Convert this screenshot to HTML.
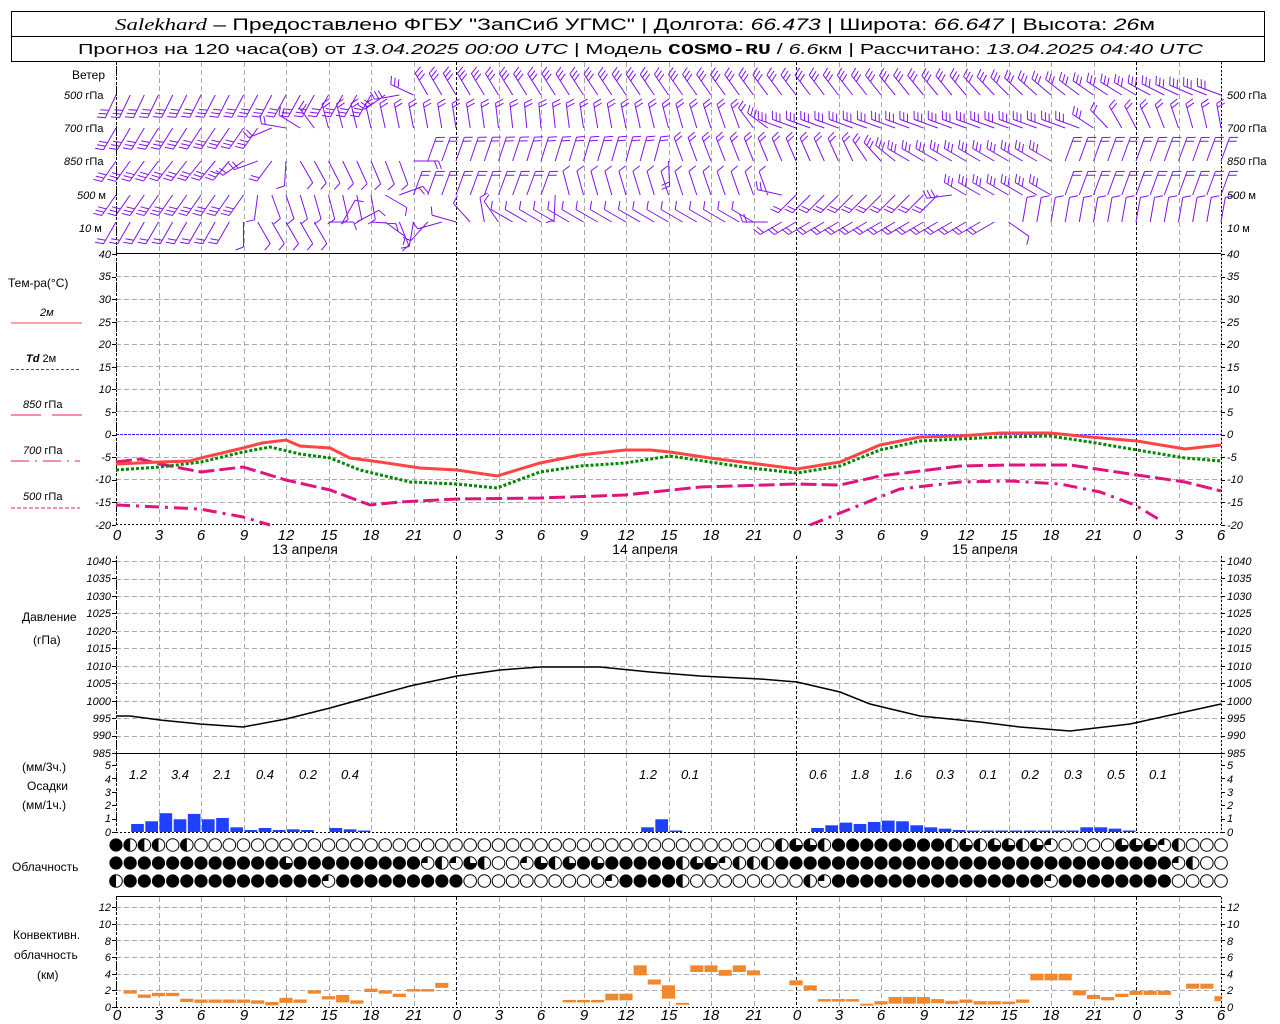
<!DOCTYPE html>
<html><head><meta charset="utf-8"><style>
html,body{margin:0;padding:0;background:#fff;width:1280px;height:1024px;overflow:hidden}
svg{display:block}
.t{font-family:"Liberation Sans",sans-serif;font-size:12px;fill:#000}
.tk{font-family:"Liberation Sans",sans-serif;font-style:italic;font-size:11px;fill:#000}
.hx{font-family:"Liberation Sans",sans-serif;font-style:italic;font-size:15px;fill:#000}
.pr{font-family:"Liberation Sans",sans-serif;font-style:italic;font-size:13px;fill:#000}
</style></head><body>
<svg id="s" xmlns="http://www.w3.org/2000/svg" width="1280" height="1024" viewBox="0 0 1280 1024">
<rect x="11.5" y="11.5" width="1253" height="50" fill="none" stroke="#000"/>
<line x1="11" y1="36.5" x2="1265" y2="36.5" stroke="#000"/>
<text x="115" y="30" textLength="1040" lengthAdjust="spacingAndGlyphs" style="font-family:'Liberation Sans',sans-serif;font-size:17px"><tspan style="font-family:'Liberation Serif',serif;font-style:italic">Salekhard</tspan> – Предоставлено ФГБУ "ЗапСиб УГМС" | Долгота: <tspan font-style="italic">66.473</tspan> | Широта: <tspan font-style="italic">66.647</tspan> | Высота: <tspan font-style="italic">26</tspan>м</text>
<text x="78" y="54" textLength="1125" lengthAdjust="spacingAndGlyphs" style="font-family:'Liberation Sans',sans-serif;font-size:15px">Прогноз на 120 часа(ов) от <tspan font-style="italic">13.04.2025 00:00 UTC</tspan>  | Модель <tspan font-weight="bold" style="font-family:'Liberation Mono',monospace">COSMO-RU</tspan> / <tspan font-style="italic">6.6</tspan>км | Рассчитано: <tspan font-style="italic">13.04.2025 04:40 UTC</tspan></text>

<g id="grid"></g>
<g id="wind"></g>
<g id="plots"></g>

<text class="t" x="72" y="79">Ветер</text>
<text class="tk" x="64" y="99">500 <tspan font-style="normal">гПа</tspan></text>
<text class="tk" x="64" y="132">700 <tspan font-style="normal">гПа</tspan></text>
<text class="tk" x="64" y="165">850 <tspan font-style="normal">гПа</tspan></text>
<text class="tk" x="77" y="199">500 <tspan font-style="normal">м</tspan></text>
<text class="tk" x="79" y="232">10 <tspan font-style="normal">  м</tspan></text>
<text class="tk" x="1227" y="99">500 <tspan font-style="normal">гПа</tspan></text>
<text class="tk" x="1227" y="132">700 <tspan font-style="normal">гПа</tspan></text>
<text class="tk" x="1227" y="165">850 <tspan font-style="normal">гПа</tspan></text>
<text class="tk" x="1227" y="199">500 <tspan font-style="normal">м</tspan></text>
<text class="tk" x="1227" y="232">10 <tspan font-style="normal">  м</tspan></text>

<text class="t" x="8" y="287">Тем-ра(°C)</text>
<text class="tk" x="40" y="316" font-style="normal">2м</text>
<line x1="11" y1="323" x2="82" y2="323" stroke="#f44"/>
<text class="tk" x="26" y="362"><tspan font-weight="bold">Td</tspan> <tspan font-style="normal">  2м</tspan></text>
<line x1="11" y1="369.5" x2="80" y2="369.5" stroke="#080" stroke-dasharray="3,2"/>
<text class="tk" x="23" y="408">850 <tspan font-style="normal">гПа</tspan></text>
<line x1="11" y1="415" x2="41" y2="415" stroke="#e0147f"/><line x1="52" y1="415" x2="82" y2="415" stroke="#e0147f"/>
<text class="tk" x="23" y="454">700 <tspan font-style="normal">гПа</tspan></text>
<line x1="11" y1="461" x2="80" y2="461" stroke="#e0147f" stroke-dasharray="18,6,2,6"/>
<text class="tk" x="23" y="500">500 <tspan font-style="normal">гПа</tspan></text>
<line x1="11" y1="508" x2="80" y2="508" stroke="#e0147f" stroke-dasharray="4,2"/>

<text class="t" x="22" y="621">Давление</text>
<text class="t" x="33" y="644">(гПа)</text>
<text class="t" x="22" y="771">(мм/3ч.)</text>
<text class="t" x="27" y="790">Осадки</text>
<text class="t" x="22" y="809">(мм/1ч.)</text>
<text class="t" x="12" y="871">Облачность</text>
<text class="t" x="13" y="939">Конвективн.</text>
<text class="t" x="14" y="959">облачность</text>
<text class="t" x="37" y="979">(км)</text>

<g class="tk" text-anchor="end">
<text x="111" y="258">40</text><text x="111" y="280">35</text><text x="111" y="303">30</text><text x="111" y="326">25</text><text x="111" y="348">20</text><text x="111" y="371">15</text><text x="111" y="393">10</text><text x="111" y="416">5</text><text x="111" y="438">0</text><text x="111" y="461">-5</text><text x="111" y="483">-10</text><text x="111" y="506">-15</text><text x="111" y="529">-20</text>
<text x="111" y="565">1040</text><text x="111" y="582">1035</text><text x="111" y="600">1030</text><text x="111" y="617">1025</text><text x="111" y="635">1020</text><text x="111" y="652">1015</text><text x="111" y="670">1010</text><text x="111" y="687">1005</text><text x="111" y="705">1000</text><text x="111" y="722">995</text><text x="111" y="739">990</text><text x="111" y="757">985</text>
<text x="111" y="769">5</text><text x="111" y="783">4</text><text x="111" y="796">3</text><text x="111" y="809">2</text><text x="111" y="822">1</text><text x="111" y="836">0</text>
<text x="111" y="911">12</text><text x="111" y="928">10</text><text x="111" y="945">8</text><text x="111" y="961">6</text><text x="111" y="978">4</text><text x="111" y="994">2</text><text x="111" y="1011">0</text>
</g>
<g class="tk">
<text x="1227" y="258">40</text><text x="1227" y="280">35</text><text x="1227" y="303">30</text><text x="1227" y="326">25</text><text x="1227" y="348">20</text><text x="1227" y="371">15</text><text x="1227" y="393">10</text><text x="1227" y="416">5</text><text x="1227" y="438">0</text><text x="1227" y="461">-5</text><text x="1227" y="483">-10</text><text x="1227" y="506">-15</text><text x="1227" y="529">-20</text>
<text x="1227" y="565">1040</text><text x="1227" y="582">1035</text><text x="1227" y="600">1030</text><text x="1227" y="617">1025</text><text x="1227" y="635">1020</text><text x="1227" y="652">1015</text><text x="1227" y="670">1010</text><text x="1227" y="687">1005</text><text x="1227" y="705">1000</text><text x="1227" y="722">995</text><text x="1227" y="739">990</text><text x="1227" y="757">985</text>
<text x="1227" y="769">5</text><text x="1227" y="783">4</text><text x="1227" y="796">3</text><text x="1227" y="809">2</text><text x="1227" y="822">1</text><text x="1227" y="836">0</text>
<text x="1227" y="911">12</text><text x="1227" y="928">10</text><text x="1227" y="945">8</text><text x="1227" y="961">6</text><text x="1227" y="978">4</text><text x="1227" y="994">2</text><text x="1227" y="1011">0</text>
</g>
<g class="hx" text-anchor="middle">
<text x="117" y="540">0</text><text x="159" y="540">3</text><text x="201" y="540">6</text><text x="244" y="540">9</text><text x="286" y="540">12</text><text x="329" y="540">15</text><text x="371" y="540">18</text><text x="414" y="540">21</text><text x="457" y="540">0</text><text x="499" y="540">3</text><text x="541" y="540">6</text><text x="584" y="540">9</text><text x="626" y="540">12</text><text x="669" y="540">15</text><text x="711" y="540">18</text><text x="754" y="540">21</text><text x="797" y="540">0</text><text x="839" y="540">3</text><text x="881" y="540">6</text><text x="924" y="540">9</text><text x="966" y="540">12</text><text x="1009" y="540">15</text><text x="1051" y="540">18</text><text x="1094" y="540">21</text><text x="1137" y="540">0</text><text x="1179" y="540">3</text><text x="1221" y="540">6</text>
<text x="117" y="1020">0</text><text x="159" y="1020">3</text><text x="201" y="1020">6</text><text x="244" y="1020">9</text><text x="286" y="1020">12</text><text x="329" y="1020">15</text><text x="371" y="1020">18</text><text x="414" y="1020">21</text><text x="457" y="1020">0</text><text x="499" y="1020">3</text><text x="541" y="1020">6</text><text x="584" y="1020">9</text><text x="626" y="1020">12</text><text x="669" y="1020">15</text><text x="711" y="1020">18</text><text x="754" y="1020">21</text><text x="797" y="1020">0</text><text x="839" y="1020">3</text><text x="881" y="1020">6</text><text x="924" y="1020">9</text><text x="966" y="1020">12</text><text x="1009" y="1020">15</text><text x="1051" y="1020">18</text><text x="1094" y="1020">21</text><text x="1137" y="1020">0</text><text x="1179" y="1020">3</text><text x="1221" y="1020">6</text>
</g>
<g style="font-family:'Liberation Sans',sans-serif;font-size:14px" text-anchor="middle">
<text x="305" y="554">13 апреля</text><text x="645" y="554">14 апреля</text><text x="985" y="554">15 апреля</text>
</g>
<g class="pr" text-anchor="middle">
<text x="138" y="779">1.2</text><text x="180" y="779">3.4</text><text x="222" y="779">2.1</text><text x="265" y="779">0.4</text><text x="308" y="779">0.2</text><text x="350" y="779">0.4</text><text x="648" y="779">1.2</text><text x="690" y="779">0.1</text><text x="818" y="779">0.6</text><text x="860" y="779">1.8</text><text x="903" y="779">1.6</text><text x="945" y="779">0.3</text><text x="988" y="779">0.1</text><text x="1030" y="779">0.2</text><text x="1073" y="779">0.3</text><text x="1116" y="779">0.5</text><text x="1158" y="779">0.1</text>
</g>
</svg>
<script>
(function(){
var NS="http://www.w3.org/2000/svg";
function el(p,n,a){var e=document.createElementNS(NS,n);for(var k in a)e.setAttribute(k,a[k]);p.appendChild(e);return e;}
var G=document.getElementById('grid'),W=document.getElementById('wind'),P=document.getElementById('plots');
var X0=116,DX=14.1667;function X(h){return X0+h*DX;}
var secs=[[62,253],[253,525],[556,753],[753,832],[897,1007]];
secs.forEach(function(s){
 for(var h=0;h<=78;h+=3){var x=Math.round(X(h))+0.5;
  var day=(h%24==0);
  el(G,'line',{x1:x,y1:s[0],x2:x,y2:s[1],stroke:day?'#000':'#aaa','stroke-dasharray':day?'3,2':'5,3','stroke-width':1});}
});
for(var t=35;t>=-20;t-=5){var y=Math.round(434-t*4.516)+0.5;if(t==0)continue;el(G,'line',{x1:116,y1:y,x2:1221,y2:y,stroke:t==-20?'#000':'#aaa','stroke-dasharray':t==-20?'2,2':'5,3'});}
el(G,'line',{x1:116,y1:434.5,x2:1221,y2:434.5,stroke:'#33f','stroke-dasharray':'3,1'});
for(var p=1040;p>985;p-=5){var y=Math.round(753-(p-985)*3.49)+0.5;el(G,'line',{x1:116,y1:y,x2:1221,y2:y,stroke:'#aaa','stroke-dasharray':'5,3'});}
for(var k=2;k<=12;k+=2){var y=Math.round(1007-k*8.33)+0.5;el(G,'line',{x1:116,y1:y,x2:1221,y2:y,stroke:'#aaa','stroke-dasharray':'5,3'});}
[253.5,753.5,896.5].forEach(function(y){el(G,'line',{x1:116,y1:y,x2:1221,y2:y,stroke:'#000'});});
[832.5,1007.5].forEach(function(y){el(G,'line',{x1:116,y1:y,x2:1221,y2:y,stroke:'#000','stroke-dasharray':'2,2'});});
[[62,525],[556,832],[897,1007]].forEach(function(s){
 el(G,'line',{x1:116.5,y1:s[0],x2:116.5,y2:s[1],stroke:'#000','stroke-dasharray':'2,2'});
 el(G,'line',{x1:1221.5,y1:s[0],x2:1221.5,y2:s[1],stroke:'#000','stroke-dasharray':'2,2'});
});
function ticks(a,b,step){for(var y=a;y<=b+0.1;y+=step){el(G,'line',{x1:112,y1:Math.round(y)+0.5,x2:116,y2:Math.round(y)+0.5,stroke:'#000'});el(G,'line',{x1:1221,y1:Math.round(y)+0.5,x2:1225,y2:Math.round(y)+0.5,stroke:'#000'});}}
ticks(254,525,22.58);ticks(561,753,17.45);ticks(765,832,13.4);ticks(907,1007,16.66);

function poly(pts,attr){var d=pts.map(function(p){return p[0]+','+p[1];}).join(' ');attr.points=d;attr.fill='none';el(P,'polyline',attr);}
poly([[116,505],[160,507],[200,509],[243,517],[270,525]],{stroke:'#e0147f','stroke-width':3,'stroke-dasharray':'14,6,3,6'});
poly([[810,525],[860,505],[900,489],[960,482],[1010,481],[1060,484],[1100,492],[1135,505],[1160,520]],{stroke:'#e0147f','stroke-width':3,'stroke-dasharray':'14,6,3,6'});
poly([[116,462],[140,459],[160,464],[201,472],[243,467],[286,480],[330,490],[370,505],[400,502],[457,499],[540,498],[625,495],[700,487],[797,484],[840,485],[880,476],[960,466],[1010,465],[1070,465],[1137,475],[1185,482],[1221,491]],{stroke:'#e0147f','stroke-width':3,'stroke-dasharray':'16,5'});
poly([[116,470],[160,467],[201,462],[243,452],[270,447],[300,454],[330,458],[360,470],[410,482],[457,484],[497,488],[540,472],[580,466],[625,463],[670,456],[710,462],[750,468],[797,473],[840,466],[880,450],[920,441],[960,439],[1000,437],[1050,436],[1090,442],[1137,450],[1185,458],[1221,461]],{stroke:'#080','stroke-width':3,'stroke-dasharray':'3,2'});
poly([[116,464],[160,462],[190,461],[201,458],[243,448],[262,443],[286,440],[300,446],[330,448],[350,458],[380,462],[420,468],[457,470],[497,476],[540,463],[580,455],[625,450],[650,450],[670,452],[710,458],[750,463],[797,469],[840,462],[880,445],[920,437],[960,436],[1000,433],[1050,433],[1090,437],[1137,441],[1185,449],[1221,445]],{stroke:'#f44','stroke-width':3});
poly([[116,716],[130,716],[160,720],[200,724],[243,727],[286,719],[330,708],[370,697],[410,686],[457,676],[500,670],[540,667],[600,667],[650,672],[700,676],[760,679],[797,682],[840,692],[870,704],[920,716],[980,722],[1020,727],[1070,731],[1130,724],[1180,713],[1221,704]],{stroke:'#000','stroke-width':1.5});

var pr={1:.6,2:.8,3:1.4,4:.95,5:1.35,6:.95,7:1.05,8:.35,9:.15,10:.3,11:.15,12:.2,13:.15,15:.3,16:.2,17:.08,37:.35,38:.95,39:.05,49:.3,50:.5,51:.7,52:.6,53:.75,54:.85,55:.8,56:.5,57:.35,58:.25,59:.15,60:.1,61:.05,62:.05,63:.05,64:.05,65:.05,66:.05,67:.05,68:.35,69:.35,70:.25,71:.1};
for(var h in pr){var v=pr[h],x=X(+h)+1,hh=Math.max(1.5,v*13.4);el(P,'rect',{x:x,y:832-hh,width:DX-1.5,height:hh,fill:'#2040ff'});}
var cv=[[1,1.8,.4],[2,1.3,.4],[3,1.5,.4],[4,1.5,.4],[5,.8,.4],[6,.7,.4],[7,.7,.4],[8,.7,.4],[9,.7,.4],[10,.6,.4],[11,.4,.4],[12,.8,.6],[13,.7,.4],[14,1.8,.4],[15,1.1,.4],[16,1.0,.9],[17,.6,.4],[18,2.0,.4],[19,1.8,.4],[20,1.4,.4],[21,2.0,.3],[22,2.0,.3],[23,2.6,.6],
[32,.7,.3],[33,.7,.3],[34,.7,.3],[35,1.2,.8],[36,1.2,.8],[37,4.4,1.2],[38,3.0,.6],[39,1.8,1.6],[40,.4,.2],[41,4.6,.8],[42,4.6,.8],[43,4.1,.7],[44,4.6,.8],[45,4.1,.6],
[48,2.9,.6],[49,2.3,.6],[50,.8,.3],[51,.8,.3],[52,.8,.3],[53,.3,.2],[54,.5,.4],[55,.8,.8],[56,.8,.8],[57,.8,.8],[58,.7,.5],[59,.55,.4],[60,.7,.4],[61,.5,.4],[62,.5,.4],[63,.5,.3],[64,.7,.4],[65,3.6,.8],[66,3.6,.8],[67,3.6,.8],[68,1.7,.6],[69,1.2,.5],[70,1.0,.4],[71,1.4,.4],[72,1.7,.5],[73,1.7,.5],[74,1.7,.5],[76,2.5,.6],[77,2.5,.6],[78,1.0,.6]];
cv.forEach(function(c){var x=X(c[0])-DX/2+0.5,w=DX-1;if(c[0]==78)w=DX/2;var y=1007-(c[1]+c[2]/2)*8.33;el(P,'rect',{x:x,y:y,width:w,height:Math.max(2,c[2]*8.33),fill:'#f08830'});});

function rep(s,n){return new Array(n+1).join(s);}
var rows=[
 "FHHHEH"+rep("E",33)+"EEEEEEEEHTTHFFFFFFFFHTHTTHTLEEEETTTLHEEE",
 "FFFFFFFFFFFFTFFFFFFFFFLHLTHEELTHTFTFFF"+"F"+"FHTTLHHH"+rep("F",28)+"LHEE",
 "H"+rep("F",14)+"L"+rep("F",9)+rep("E",10)+"LFFF"+"FH"+rep("E",8)+"HL"+rep("F",15)+"L"+rep("F",8)+"EEEE"];
var cys=[845,863,881],r=6.3;
rows.forEach(function(s,ri){var cy=cys[ri];
 for(var h=0;h<=78;h++){var c=s.charAt(h)||'E',cx=X(h);
  if(c=='F'){el(P,'circle',{cx:cx,cy:cy,r:r+0.3,fill:'#000'});continue;}
  el(P,'circle',{cx:cx,cy:cy,r:r,fill:'#fff',stroke:'#000','stroke-width':1});
  if(c=='H'){el(P,'path',{d:'M'+cx+','+(cy-r)+' A'+r+','+r+' 0 0 0 '+cx+','+(cy+r)+' Z',fill:'#000'});}
  if(c=='T'){el(P,'path',{d:'M'+cx+','+cy+' L'+cx+','+(cy-r)+' A'+r+','+r+' 0 1 0 '+(cx+r)+','+cy+' Z',fill:'#000'});}
  if(c=='L'){el(P,'path',{d:'M'+cx+','+cy+' L'+cx+','+(cy-r)+' A'+r+','+r+' 0 0 0 '+(cx-r)+','+cy+' Z',fill:'#000'});}
 }});

var wrows=[
 {y:95,k:[[0,205,3],[18,210,3],[20,260,3],[22,330,3],[60,320,3],[72,300,3],[78,290,3]]},
 {y:128,k:[[0,210,3],[10,215,3],[12,280,2],[15,345,2],[30,355,2],[44,340,2],[47,290,3],[68,290,3],[71,330,2],[78,350,2]]},
 {y:161,k:[[0,215,3],[8,220,3],[10,250,2],[13,150,1],[20,160,1],[22,20,2],[38,15,2],[40,340,2],[52,335,2],[56,300,3],[66,300,3],[67,20,2],[78,20,2]]},
 {y:195,k:[[0,215,3],[9,215,3],[11,160,1],[18,170,1],[21,20,2],[30,20,2],[32,345,1],[46,340,1],[48,225,2],[58,225,2],[60,300,3],[66,300,3],[67,20,2],[78,20,2]]},
 {y:222,k:[[0,210,2],[8,210,2],[10,150,1],[14,150,1],[16,30,1],[26,350,1],[28,300,1],[45,300,1],[47,240,2],[62,240,2],[64,10,1],[78,10,1]]}];
function interp(k,h){for(var i=0;i<k.length-1;i++){if(h>=k[i][0]&&h<=k[i+1][0]){var f=(h-k[i][0])/(k[i+1][0]-k[i][0]);return [k[i][1]+(k[i+1][1]-k[i][1])*f,f<0.5?k[i][2]:k[i+1][2]];}}return [k[k.length-1][1],k[k.length-1][2]];}
var d='';
wrows.forEach(function(r){for(var h=0;h<=78;h++){var v=interp(r.k,h),a=v[0]*Math.PI/180,n=v[1];
 var sx=X(h),sy=r.y,ux=Math.sin(a),uy=-Math.cos(a),L=25;
 var ex=sx+L*ux,ey=sy+L*uy;d+='M'+sx.toFixed(1)+','+sy.toFixed(1)+'L'+ex.toFixed(1)+','+ey.toFixed(1);
 var px=-uy,py=ux;
 for(var i=0;i<n;i++){var bx=ex-ux*i*4,by=ey-uy*i*4;d+='M'+bx.toFixed(1)+','+by.toFixed(1)+'L'+(bx+8*px+3*ux).toFixed(1)+','+(by+8*py+3*uy).toFixed(1);}
}});
el(W,'path',{d:d,stroke:'#8010f0','stroke-width':1,fill:'none'});
})();
</script>
</body></html>
